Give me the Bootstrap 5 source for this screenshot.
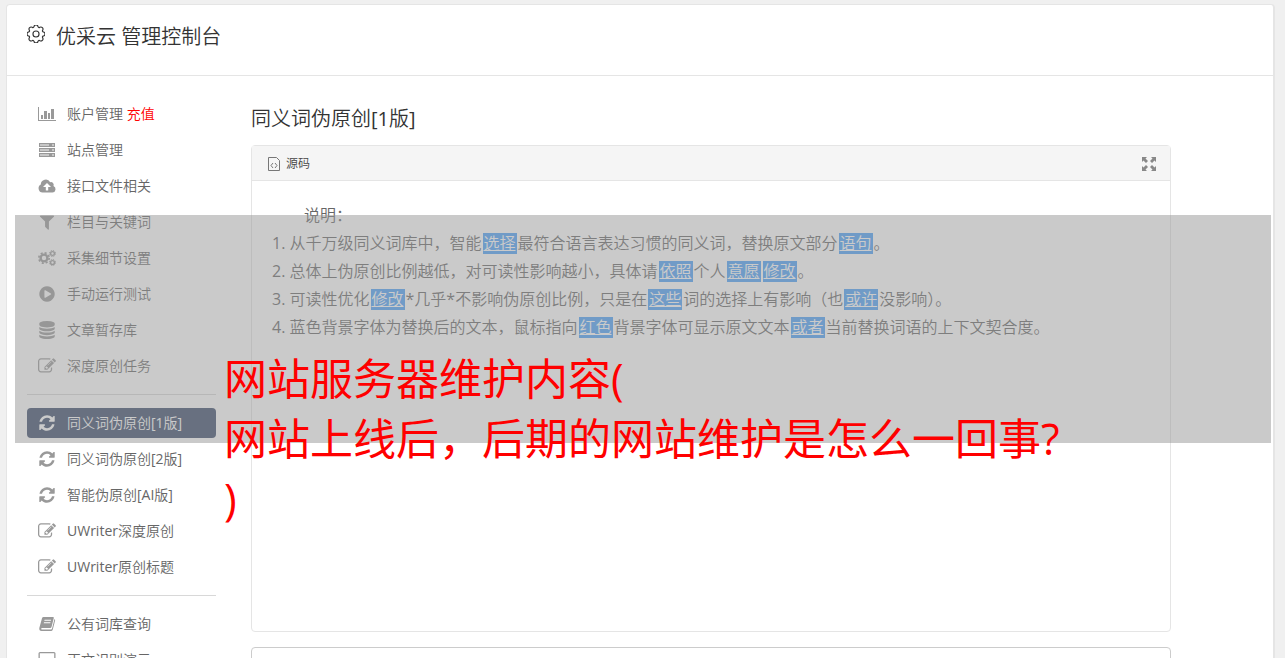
<!DOCTYPE html>
<html lang="zh-CN">
<head>
<meta charset="utf-8">
<meta name="viewport" content="width=device-width, initial-scale=1">
<title>优采云 管理控制台</title>
<link href="https://cdn.jsdelivr.net/npm/bootstrap@5.3.0/dist/css/bootstrap.min.css" rel="stylesheet">
<style>
body{background:#f0f0f0;color:#333;font-family:"Open Sans","Noto Sans CJK SC DemiLight","Noto Sans CJK SC",sans-serif;font-weight:400;font-size:14px;padding:4px 10px 0 6px}
.console{border:1px solid #e5e5e5;border-right-width:2px;border-radius:4px;min-height:100vh}
.console-head{height:71px;padding:17px 20px;border-bottom:1px solid #e5e5e5}
.console-head h1,.work h2{font-size:20px;font-weight:400;line-height:30px;margin:0}
.console-head svg{width:18px;height:18px;margin:3px 11px 0 0}
.console-body{padding:20px 102px 0 20px;gap:35px}
.side{width:189px}
.side .nav-link{color:#666;height:30px;line-height:30px;margin:3px 0;padding:0 0 0 10px;border-radius:4px}
.side svg{width:20px;height:18px;margin-right:10px;fill:#999;color:#999}
.side .nav-link.active{background:#3a4b6b;color:#fff}
.side .active svg{fill:#fff}
.side hr{margin:10px 0;border-color:#d8d8d8;opacity:1}
.side .pay{color:red}
.work{min-width:0;padding-top:8px}
.panel{border:1px solid #e5e5e5;border-radius:4px;min-height:487px;margin-top:11px}
.panel-tools{height:35px;background:#f5f5f5;border-bottom:1px solid #e5e5e5;padding:2px 13px 0 16px}
.panel-tools button{font-size:12px;color:#444;background:none;border:0;padding:0;gap:6px}
.note{padding:20px 20px;font-size:16px;line-height:28px;color:#666}
.note p{text-indent:32px}
.swap{background:#4ba0f8;color:#fff;display:inline-block;line-height:21px;height:21px;padding:0 1px;margin:0 1px;text-decoration:underline;vertical-align:baseline}
.swap:hover{color:#fff}
.result{height:100px;margin-top:15px;border:1px solid #ccc;border-radius:4px;resize:none}
.banner{top:215px;left:15px;right:14px;height:228px;background:rgba(150,150,150,.5);padding:134px 0 0 209px;pointer-events:none}
.banner p{color:red;font-family:"Open Sans","Noto Sans CJK SC",sans-serif;font-size:43px;line-height:60px;white-space:nowrap}
</style>
</head>
<body class="vh-100 overflow-hidden position-relative">
<svg class="d-none">
<symbol id="i-refresh" viewBox="0 0 1792 1792"><path d="M1639 1056q0 5-1 7-64 268-268 434.500t-478 166.500q-146 0-282.500-55t-243.500-157l-129 129q-19 19-45 19t-45-19-19-45v-448q0-26 19-45t45-19h448q26 0 45 19t19 45-19 45l-137 137q71 66 161 102t187 36q134 0 250-65t186-179q11-17 53-117 8-23 30-23h192q13 0 22.500 9.500t9.500 22.500zm25-800v448q0 26-19 45t-45 19h-448q-26 0-45-19t-19-45 19-45l138-138q-148-137-349-137-134 0-250 65t-186 179q-11 17-53 117-8 23-30 23h-199q-13 0-22.500-9.500t-9.500-22.500v-7q65-268 270-434.500t480-166.500q146 0 284 55.500t245 156.500l130-129q19-19 45-19t45 19 19 45z"/></symbol>
<symbol id="i-edit" viewBox="0 0 1792 1792"><path d="M888 1184l116-116-152-152-116 116v56h96v96h56zm440-720q-16-16-33 1l-350 350q-17 17-1 33t33-1l350-350q17-17 1-33zm80 594v190q0 119-84.500 203.500t-203.500 84.500h-832q-119 0-203.500-84.500t-84.500-203.500v-832q0-119 84.500-203.500t203.500-84.500h832q63 0 117 25 15 7 18 23 3 17-9 29l-49 49q-14 14-32 8-23-6-45-6h-832q-66 0-113 47t-47 113v832q0 66 47 113t113 47h832q66 0 113-47t47-113v-126q0-13 9-22l64-64q15-15 35-7t20 29zm-96-738l288 288-672 672h-288v-288zm444 132l-92 92-288-288 92-92q28-28 68-28t68 28l152 152q28 28 28 68t-28 68z"/></symbol>
<symbol id="i-chart" viewBox="0 0 20 18"><path d="M1 2h1v13h17v1H1zM4 10h2v4H4zM7 6h3v8H7zM11 8h2v6h-2zM14 4h3v10h-3z"/></symbol>
<symbol id="i-server" viewBox="0 0 20 18"><path opacity=".55" d="M2 3h16v2H2zM2 8h16v2H2zM2 13h16v2H2z"/><path d="M2 2h16v1H2zM2 5h16v1H2zM2 7h16v1H2zM2 10h16v1H2zM2 12h16v1H2zM2 15h16v1H2zM2 3h1v2H2zM2 8h1v2H2zM2 13h1v2H2zM12 3h3v2h-3zM12 8h3v2h-3zM12 13h3v2h-3zM17 3h1v2h-1zM17 8h1v2h-1zM17 13h1v2h-1z"/></symbol>
<symbol id="i-cloud" viewBox="0 0 20 18"><path fill-rule="evenodd" d="M5.500 15.500A4.200 4.200 0 0 1 3.800 7.600 5 5 0 0 1 13.200 5.200 2.800 2.800 0 0 1 16.500 9 3.400 3.400 0 0 1 15.500 15.500zM10 6 6 10h2.800v3.500h2.400V10H14z"/></symbol>
<symbol id="i-filter" viewBox="0 0 1792 1792"><path d="M1595 295q17 41-14 70l-493 493v742q0 42-39 59-13 5-25 5-27 0-45-19l-256-256q-19-19-19-45v-486l-493-493q-31-29-14-70 17-39 59-39h1280q42 0 59 39z"/></symbol>
<symbol id="i-cogs" viewBox="0 0 20 18"><g fill="none" stroke="currentColor"><circle cx="7" cy="9" r="3.400" stroke-width="2.400"/><circle cx="7" cy="9" r="5.200" stroke-width="1.600" stroke-dasharray="2.100 1.984"/><circle cx="15.500" cy="4.500" r="1.900" stroke-width="1.400"/><circle cx="15.500" cy="4.500" r="3" stroke-width="1" stroke-dasharray="1.300 1.056"/><circle cx="15.500" cy="13.500" r="1.900" stroke-width="1.400"/><circle cx="15.500" cy="13.500" r="3" stroke-width="1" stroke-dasharray="1.300 1.056"/></g></symbol>
<symbol id="i-play" viewBox="0 0 1792 1792"><path d="M896 128q209 0 385.500 103t279.500 279.500 103 385.500-103 385.500-279.500 279.500-385.500 103-385.500-103-279.500-279.500-103-385.500 103-385.500 279.500-279.500 385.500-103zm384 823q32-18 32-55t-32-55l-544-320q-31-19-64-1-32 19-32 56v640q0 37 32 56 16 8 32 8 17 0 32-9z"/></symbol>
<symbol id="i-data" viewBox="0 0 1792 1792"><path d="M896 768q237 0 443-43t325-127v170q0 69-103 128t-280 93.500-385 34.500-385-34.500-280-93.500-103-128v-170q119 84 325 127t443 43zm0 768q237 0 443-43t325-127v170q0 69-103 128t-280 93.500-385 34.500-385-34.500-280-93.500-103-128v-170q119 84 325 127t443 43zm0-384q237 0 443-43t325-127v170q0 69-103 128t-280 93.500-385 34.500-385-34.500-280-93.500-103-128v-170q119 84 325 127t443 43zm0-1152q208 0 385 34.500t280 93.500 103 128v128q0 69-103 128t-280 93.500-385 34.500-385-34.500-280-93.500-103-128v-128q0-69 103-128t280-93.500 385-34.500z"/></symbol>
<symbol id="i-book" viewBox="0 0 20 18"><path fill-rule="evenodd" d="M6.500 2H16q1 0 .8 1L14.500 12q-.3 1-1.300 1H4.500q-.8 1.500.5 1.500h9q.8 0 1-.8L17.500 4q.9.500.6 1.500L15.800 14.500Q15.300 16 14 16H4.500Q2 16 2.300 13L5 3.300Q5.400 2 6.500 2zM7.600 4.800 7.300 5.800h6.500l.3-1zM7 7.200 6.700 8.200h6.500l.3-1z"/></symbol>
<symbol id="i-desk" viewBox="0 0 20 18"><path fill-rule="evenodd" d="M3 1h14q1.500 0 1.500 1.500v10Q18.500 14 17 14H3q-1.500 0-1.500-1.500v-10Q1.500 1 3 1zM2.800 2.300v9h14.400v-9zM7 15h6v2H7z"/></symbol>
</svg>
<div class="console bg-white">
<header class="console-head d-flex align-items-start">
<svg viewBox="0 0 16 16" fill="none" stroke="#333"><path d="M9.796 1.343c-.527-1.790-3.065-1.790-3.592 0l-.094.319a.873.873 0 0 1-1.255.520l-.292-.160c-1.640-.892-3.433.902-2.540 2.541l.159.292a.873.873 0 0 1-.520 1.255l-.319.094c-1.790.527-1.790 3.065 0 3.592l.319.094a.873.873 0 0 1 .520 1.255l-.160.292c-.892 1.640.901 3.434 2.541 2.540l.292-.159a.873.873 0 0 1 1.255.520l.094.319c.527 1.790 3.065 1.790 3.592 0l.094-.319a.873.873 0 0 1 1.255-.520l.292.160c1.640.893 3.434-.902 2.540-2.541l-.159-.292a.873.873 0 0 1 .520-1.255l.319-.094c1.790-.527 1.790-3.065 0-3.592l-.319-.094a.873.873 0 0 1-.520-1.255l.160-.292c.893-1.640-.902-3.433-2.541-2.540l-.292.159a.873.873 0 0 1-1.255-.520z"/><circle cx="8" cy="8" r="2.700"/></svg>
<h1>优采云 管理控制台</h1>
</header>
<div class="console-body d-flex">
<nav class="side nav flex-column flex-shrink-0">
<a class="nav-link d-flex align-items-center" href="#"><svg><use href="#i-chart"/></svg>账户管理&nbsp;<span class="pay">充值</span></a>
<a class="nav-link d-flex align-items-center" href="#"><svg><use href="#i-server"/></svg>站点管理</a>
<a class="nav-link d-flex align-items-center" href="#"><svg><use href="#i-cloud"/></svg>接口文件相关</a>
<a class="nav-link d-flex align-items-center" href="#"><svg><use href="#i-filter"/></svg>栏目与关键词</a>
<a class="nav-link d-flex align-items-center" href="#"><svg><use href="#i-cogs"/></svg>采集细节设置</a>
<a class="nav-link d-flex align-items-center" href="#"><svg><use href="#i-play"/></svg>手动运行测试</a>
<a class="nav-link d-flex align-items-center" href="#"><svg><use href="#i-data"/></svg>文章暂存库</a>
<a class="nav-link d-flex align-items-center" href="#"><svg><use href="#i-edit"/></svg>深度原创任务</a>
<hr>
<a class="nav-link active d-flex align-items-center" href="#"><svg><use href="#i-refresh"/></svg>同义词伪原创[1版]</a>
<a class="nav-link d-flex align-items-center" href="#"><svg><use href="#i-refresh"/></svg>同义词伪原创[2版]</a>
<a class="nav-link d-flex align-items-center" href="#"><svg><use href="#i-refresh"/></svg>智能伪原创[AI版]</a>
<a class="nav-link d-flex align-items-center" href="#"><svg><use href="#i-edit"/></svg>UWriter深度原创</a>
<a class="nav-link d-flex align-items-center" href="#"><svg><use href="#i-edit"/></svg>UWriter原创标题</a>
<hr>
<a class="nav-link d-flex align-items-center" href="#"><svg><use href="#i-book"/></svg>公有词库查询</a>
<a class="nav-link d-flex align-items-center" href="#"><svg><use href="#i-desk"/></svg>正文识别演示</a>
</nav>
<main class="work flex-grow-1">
<h2>同义词伪原创[1版]</h2>
<section class="panel">
<div class="panel-tools d-flex align-items-center justify-content-between">
<button type="button" class="d-flex align-items-center"><svg width="12" height="14" viewBox="0 0 12 14" fill="none" stroke="#777"><path d="M.5 .5h8l3 3v10H.5zM5 6 3 8.500 5 11M7 6l2 2.500L7 11"/></svg>源码</button>
<button type="button" class="d-flex" aria-label="全屏"><svg width="16" height="16" viewBox="0 0 16 16" fill="#888"><path d="M1 1h5L4.500 2.500 7 5 5 7 2.500 4.500 1 6zM15 1v5l-1.500-1.500L11 7 9 5l2.500-2.500L10 1zM1 15v-5l1.500 1.500L5 9l2 2-2.500 2.500L6 15zM15 15h-5l1.500-1.500L9 11l2-2 2.500 2.500L15 10z"/></svg></button>
</div>
<div class="note">
<p class="mb-0">说明：</p>
<ol class="list-unstyled mb-0">
<li>1. 从千万级同义词库中，智能<a href="#" class="swap">选择</a>最符合语言表达习惯的同义词，替换原文部分<a href="#" class="swap">语句</a>。</li>
<li>2. 总体上伪原创比例越低，对可读性影响越小，具体请<a href="#" class="swap">依照</a>个人<a href="#" class="swap">意愿</a><a href="#" class="swap">修改</a>。</li>
<li>3. 可读性优化<a href="#" class="swap">修改</a>*几乎*不影响伪原创比例，只是在<a href="#" class="swap">这些</a>词的选择上有影响（也<a href="#" class="swap">或许</a>没影响）。</li>
<li>4. 蓝色背景字体为替换后的文本，鼠标指向<a href="#" class="swap">红色</a>背景字体可显示原文文本<a href="#" class="swap">或者</a>当前替换词语的上下文契合度。</li>
</ol>
</div>
</section>
<textarea class="result d-block w-100" aria-label="结果"></textarea>
</main>
</div>
</div>
<div class="banner position-absolute"><p class="mb-0">网站服务器维护内容(<br>网站上线后，后期的网站维护是怎么一回事?<br>)</p></div>
<script src="https://cdn.jsdelivr.net/npm/bootstrap@5.3.0/dist/js/bootstrap.bundle.min.js"></script>
</body>
</html>
